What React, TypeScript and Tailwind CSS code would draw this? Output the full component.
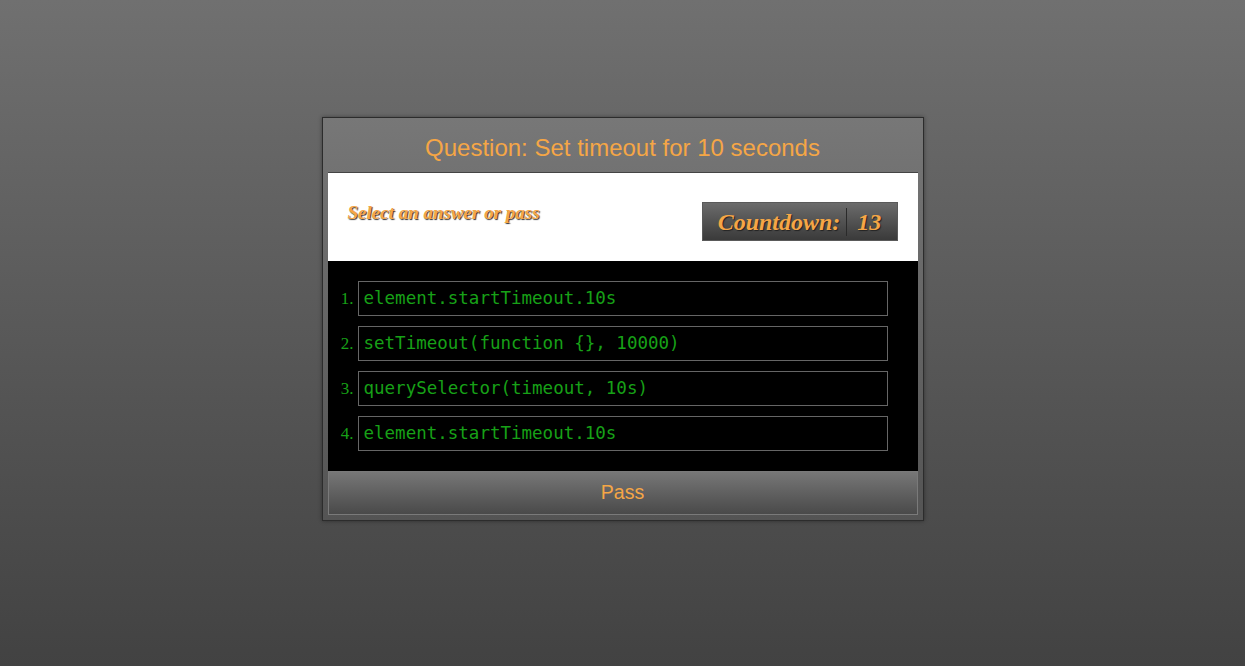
export default function App() {
  const answers = [
    'element.startTimeout.10s',
    'setTimeout(function {}, 10000)',
    'querySelector(timeout, 10s)',
    'element.startTimeout.10s',
  ];

  return (
    <div className="min-h-screen w-full bg-gradient-to-b from-[#707070] to-[#424242] flex justify-center pt-[117px]">
      <div className="w-[602px] h-[404px] border border-[#2c2c2c] bg-gradient-to-b from-[#777777] to-[#545454] px-[5px] pb-[5px] shadow-[0_0_4px_rgba(0,0,0,0.4)] flex flex-col">
        <div className="h-[54px] pt-[5px] flex items-center justify-center text-[24px] text-[#f5a646] font-['Liberation_Sans',Arial,sans-serif]">
          Question: Set timeout for 10 seconds
        </div>
        <div className="h-[89px] bg-white flex items-start justify-between pl-[20px] pr-[20px] border-t border-[#444]">
          <div className="mt-[26px] text-[19px] font-bold italic text-[#f5a646] font-['Liberation_Serif','Times_New_Roman',serif] [text-shadow:1px_1px_1px_#333]">
            Select an answer or pass
          </div>
          <div className="mt-[29px] w-[196px] h-[39px] border border-[#5a5a5a] bg-gradient-to-b from-[#6c6c6c] to-[#3a3a3a] flex items-center justify-center font-['Liberation_Serif','Times_New_Roman',serif] text-[24px] font-bold italic text-[#f5a646] [text-shadow:1px_1px_1px_#222]">
            <span className="pr-[6px]">Countdown:</span>
            <span className="w-px h-[28px] bg-[#2a2a2a]"></span>
            <span className="pl-[10px]">13</span>
          </div>
        </div>
        <div className="h-[210px] bg-black pt-[20px] flex flex-col gap-[10px]">
          {answers.map((a, i) => (
            <div key={i} className="flex items-center">
              <span className="w-[30px] pr-[4px] text-right text-[17px] text-[#17a117] font-['Liberation_Serif','Times_New_Roman',serif]">
                {i + 1}.
              </span>
              <div className="w-[530px] h-[35px] border border-[#666] flex items-center pl-[5px] text-[17.5px] text-[#17a117] font-['DejaVu_Sans_Mono',monospace]">
                {a}
              </div>
            </div>
          ))}
        </div>
        <div className="flex-1 border border-[#7a7a7a] bg-gradient-to-b from-[#777777] to-[#4a4a4a] flex items-center justify-center text-[19.5px] text-[#f5a646] font-['Liberation_Sans',Arial,sans-serif]">
          Pass
        </div>
      </div>
    </div>
  );
}
